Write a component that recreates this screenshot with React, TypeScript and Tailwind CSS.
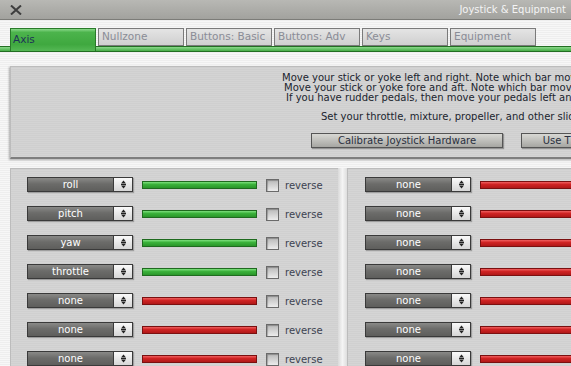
const tabs = ["Axis", "Nullzone", "Buttons: Basic", "Buttons: Adv", "Keys", "Equipment"];

const leftRows = [
  { axis: "roll", on: true },
  { axis: "pitch", on: true },
  { axis: "yaw", on: true },
  { axis: "throttle", on: true },
  { axis: "none", on: false },
  { axis: "none", on: false },
  { axis: "none", on: false },
];

function Select({ value }: { value: string }) {
  return (
    <div className="flex h-[15px] w-[106px] shrink-0 shadow-[1px_1px_1px_rgba(0,0,0,0.25)]">
      <div className="flex h-full w-[87px] items-center justify-center border border-[#3a3a3a] bg-[linear-gradient(#8a8a88,#6c6c6a_45%,#5e5e5c)] text-[10px] leading-none text-white">
        {value}
      </div>
      <div className="flex h-full w-[19px] items-center justify-center border border-l-0 border-[#3a3a3a] bg-[linear-gradient(#fafafa,#d6d6d6)]">
        <svg width="7" height="9" viewBox="0 0 7 9">
          <path d="M3.5 0.5 L6 3.5 L1 3.5 Z" fill="#222" />
          <path d="M1 4.5 L6 4.5" stroke="#222" strokeWidth="1" />
          <path d="M3.5 8.5 L6 5.5 L1 5.5 Z" fill="#222" />
        </svg>
      </div>
    </div>
  );
}

function Bar({ on }: { on: boolean }) {
  return (
    <div
      className={
        on
          ? "h-[8px] w-[115px] shrink-0 border border-[#1f6a1f] bg-[linear-gradient(#7ee07e,#3bb23b_40%,#2a962a)]"
          : "h-[8px] w-[115px] shrink-0 border border-[#7a1010] bg-[linear-gradient(#f06060,#d02424_40%,#b01818)]"
      }
    />
  );
}

function Row({ axis, on, withReverse }: { axis: string; on: boolean; withReverse: boolean }) {
  return (
    <div className="flex h-[29px] shrink-0 items-start pt-[8px]">
      <Select value={axis} />
      <div className="ml-[9px] mt-[4px] shrink-0">
        <Bar on={on} />
      </div>
      {withReverse && (
        <div className="ml-[9px] mt-[2px] flex shrink-0 items-center">
          <div className="h-[13px] w-[13px] border border-[#6a6a6a] bg-[linear-gradient(#b8b8b8,#ececec)] shadow-[inset_1px_1px_1px_rgba(0,0,0,0.25)]" />
          <span className="ml-[6px] text-[10px] leading-none text-[#3c4250]">reverse</span>
        </div>
      )}
    </div>
  );
}

export default function App() {
  return (
    <div className="relative h-[366px] w-[571px] overflow-hidden bg-[repeating-linear-gradient(#eeeeee_0px,#eeeeee_1px,#f7f7f7_1px,#f7f7f7_2px)] font-['DejaVu_Sans',sans-serif]">
      {/* title bar */}
      <div className="flex h-[20px] items-center justify-between border-b border-[#7c7c78] bg-[linear-gradient(#b8b8b4,#a2a29e)] px-[10px]">
        <svg width="12" height="10" viewBox="0 0 12 10">
          <path d="M1 0.5 L11 9.5 M11 0.5 L1 9.5" stroke="#3e3e3e" strokeWidth="2" />
        </svg>
        <span className="-mr-[5px] text-[10px] text-[#f4f4f4]">Joystick &amp; Equipment</span>
      </div>

      {/* tabs */}
      <div className="mt-[8px] flex gap-[2px] pl-[10px]">
        {tabs.map((t, i) => (
          <div
            key={t}
            className={
              i === 0
                ? "relative z-10 -mb-[5px] flex h-[23px] w-[86px] shrink-0 items-start border border-b-0 border-[#2a7a2a] bg-[linear-gradient(#8ad88a,#4cb44c_15%,#3fa83f_70%,#55b855)] pl-[2px] pt-[3px] text-[10.5px] text-[#1e3456]"
                : "flex h-[18px] w-[86px] shrink-0 items-center border border-[#7a7a7a] bg-[linear-gradient(#e4e4e4,#cfcfcf)] pl-[3px] text-[10.5px] text-[#8a8c96]"
            }
          >
            {t}
          </div>
        ))}
      </div>
      <div className="h-[6px] border-y border-[#226e22] bg-[linear-gradient(#8ad88a,#46ac46)]" />

      {/* info panel */}
      <div className="ml-[10px] mt-[14px] h-[93px] w-[700px] border-b-2 border-l border-t border-b-[#7e7e7e] border-l-[#bcbcbc] border-t-[#bcbcbc] bg-[repeating-linear-gradient(#cfcfcf_0px,#cfcfcf_1px,#d4d4d4_1px,#d4d4d4_2px)] shadow-[-1px_1px_2px_rgba(0,0,0,0.3)]">
        <div className="whitespace-nowrap pt-[6px] text-[10px] leading-[10px] text-[#20242e]">
          <div className="pl-[271px]">Move your stick or yoke left and right. Note which bar moves and select roll for it.</div>
          <div className="pl-[273px]">Move your stick or yoke fore and aft. Note which bar moves and select pitch for it.</div>
          <div className="pl-[275px]">If you have rudder pedals, then move your pedals left and right and select yaw.</div>
          <div className="mt-[9px] pl-[310px]">Set your throttle, mixture, propeller, and other sliders to match.</div>
        </div>
        <div className="mt-[11px] flex gap-[18px] pl-[300px]">
          <div className="flex h-[15px] w-[192px] shrink-0 items-center justify-center border border-[#555] bg-[linear-gradient(#d8d8d4,#a6a6a2)] text-[10px] text-[#2a3040] shadow-[1px_1px_1px_rgba(0,0,0,0.3)]">
            Calibrate Joystick Hardware
          </div>
          <div className="flex h-[15px] w-[118px] shrink-0 items-center justify-center border border-[#555] bg-[linear-gradient(#d8d8d4,#a6a6a2)] text-[10px] text-[#2a3040] shadow-[1px_1px_1px_rgba(0,0,0,0.3)]">
            Use This Setup
          </div>
        </div>
      </div>

      {/* axis panels */}
      <div className="ml-[10px] mt-[9px] flex">
        <div className="h-[220px] w-[328px] shrink-0 border-l border-t border-[#bcbcbc] bg-[repeating-linear-gradient(#d0d0d0_0px,#d0d0d0_1px,#d5d5d5_1px,#d5d5d5_2px)] pl-[16px]">
          {leftRows.map((r, i) => (
            <Row key={i} axis={r.axis} on={r.on} withReverse />
          ))}
        </div>
        <div className="h-[220px] w-[9px] shrink-0 bg-[linear-gradient(90deg,#dadada,#f4f4f4_50%,#dedede)]" />
        <div className="h-[220px] w-[328px] shrink-0 border-l border-t border-[#bcbcbc] bg-[repeating-linear-gradient(#d0d0d0_0px,#d0d0d0_1px,#d5d5d5_1px,#d5d5d5_2px)] pl-[17px]">
          {leftRows.map((_, i) => (
            <Row key={i} axis="none" on={false} withReverse={false} />
          ))}
        </div>
      </div>
    </div>
  );
}
